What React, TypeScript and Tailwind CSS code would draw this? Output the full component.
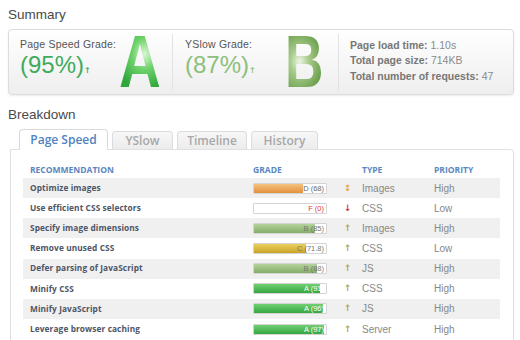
const rows = [
  { name: 'Optimize images', grade: 'D (68)', pct: 68, fill: 'bg-linear-to-b from-[#f4c27e] to-[#e2913a]', label: 'text-[#666]', arrow: '↕', arrowColor: 'text-[#eda548]', type: 'Images', priority: 'High' },
  { name: 'Use efficient CSS selectors', grade: 'F (0)', pct: 0, fill: 'bg-white', label: 'text-[#e0393e]', arrow: '↓', arrowColor: 'text-[#d8343a]', type: 'CSS', priority: 'Low' },
  { name: 'Specify image dimensions', grade: 'B (85)', pct: 85, fill: 'bg-linear-to-b from-[#b4d29c] to-[#86ad68]', label: 'text-[#777]', arrow: '↑', arrowColor: 'text-[#b0a55a]', type: 'Images', priority: 'High' },
  { name: 'Remove unused CSS', grade: 'C (71.8)', pct: 71.8, fill: 'bg-linear-to-b from-[#ecd05c] to-[#c9a227]', label: 'text-[#777]', arrow: '↑', arrowColor: 'text-[#b0a55a]', type: 'CSS', priority: 'Low' },
  { name: 'Defer parsing of JavaScript', grade: 'B (88)', pct: 88, fill: 'bg-linear-to-b from-[#b4d29c] to-[#86ad68]', label: 'text-[#777]', arrow: '↑', arrowColor: 'text-[#b0a55a]', type: 'JS', priority: 'High' },
  { name: 'Minify CSS', grade: 'A (91)', pct: 91, fill: 'bg-linear-to-b from-[#6fd072] to-[#35a642]', label: 'text-white', arrow: '↑', arrowColor: 'text-[#b0a55a]', type: 'CSS', priority: 'High' },
  { name: 'Minify JavaScript', grade: 'A (96)', pct: 96, fill: 'bg-linear-to-b from-[#6fd072] to-[#35a642]', label: 'text-white', arrow: '↑', arrowColor: 'text-[#b0a55a]', type: 'JS', priority: 'High' },
  { name: 'Leverage browser caching', grade: 'A (97)', pct: 97, fill: 'bg-linear-to-b from-[#6fd072] to-[#35a642]', label: 'text-white', arrow: '↑', arrowColor: 'text-[#b0a55a]', type: 'Server', priority: 'High' },
];

const tabs = [
  { name: 'YSlow', w: 'w-[61px]' },
  { name: 'Timeline', w: 'w-[70px]' },
  { name: 'History', w: 'w-[67px]' },
];

function GradeBar({ row }: { row: (typeof rows)[number] }) {
  return (
    <div className="relative h-[11px] w-[74px] overflow-hidden rounded-[1px] border border-[#d4d4d4] bg-white">
      <div className={`h-full ${row.fill}`} style={{ width: row.pct + '%' }} />
      <span className={`absolute right-[2px] top-0 text-[7.5px] leading-[10px] ${row.label}`}>{row.grade}</span>
    </div>
  );
}

export default function App() {
  return (
    <div className="h-[340px] w-[520px] overflow-hidden bg-white px-2 pt-[5.5px] font-['Liberation_Sans',Arial,sans-serif]">
      <h2 className="text-[13.5px] leading-[18px] text-[#4a4a4a]">Summary</h2>

      <div className="mt-[5.5px] flex h-[66px] w-[506px] rounded-[4px] border border-[#dcdcdc] bg-linear-to-b from-white to-[#eeeeee] shadow-[0_1px_2px_rgba(0,0,0,0.08)]">
        <div className="flex w-[163px] pl-[11px]">
          <div className="w-[102px] pt-[8px]">
            <p className="text-[10.5px] leading-[13px] tracking-[0.2px] text-[#555]">Page Speed Grade:</p>
            <p className="text-[24px] leading-[28px] text-[#3fab5c]">
              (95%)<span className="font-['DejaVu_Sans',sans-serif] text-[8px] font-bold">↑</span>
            </p>
          </div>
          <span className="mt-[5px] inline-block origin-left scale-x-[0.78] bg-[radial-gradient(circle_at_62%_32%,#d9f6d2_0%,#6fd26b_30%,#2ea63a_70%)] bg-clip-text text-[74px] font-bold leading-[54px] text-transparent">
            A
          </span>
        </div>
        <div className="my-[4px] w-px bg-[#e2e2e2]" />
        <div className="flex w-[165px] pl-[12px]">
          <div className="w-[102px] pt-[8px]">
            <p className="text-[10.5px] leading-[13px] tracking-[0.2px] text-[#555]">YSlow Grade:</p>
            <p className="text-[24px] leading-[28px] text-[#8cc07b]">
              (87%)<span className="font-['DejaVu_Sans',sans-serif] text-[8px] font-bold">↑</span>
            </p>
          </div>
          <span className="mt-[5px] inline-block origin-left scale-x-[0.72] bg-[radial-gradient(circle_at_38%_45%,#eef5e6_0%,#a7cb8b_28%,#6c9f4c_70%)] bg-clip-text text-[74px] font-bold leading-[54px] text-transparent">
            B
          </span>
        </div>
        <div className="my-[4px] w-px bg-[#e2e2e2]" />
        <div className="pl-[11px] pt-[7.5px] text-[10.5px] leading-[15.5px] text-[#8a8a8a]">
          <p><span className="font-bold text-[#777]">Page load time:</span> 1.10s</p>
          <p><span className="font-bold text-[#777]">Total page size:</span> 714KB</p>
          <p><span className="font-bold text-[#777]">Total number of requests:</span> 47</p>
        </div>
      </div>

      <h2 className="mt-[11px] text-[13.5px] leading-[18px] text-[#4a4a4a]">Breakdown</h2>

      <div className="mt-[5px] flex items-end gap-[4px] pl-[11px] font-['Open_Sans',sans-serif]">
        <div className="relative z-10 -mb-px flex h-[21px] w-[89px] items-center justify-center rounded-t-[4px] border border-b-0 border-[#dadada] bg-white text-[12px] font-semibold text-[#4f82c0]">
          Page Speed
        </div>
        {tabs.map((t) => (
          <div
            key={t.name}
            className={`flex h-[18px] ${t.w} items-center justify-center rounded-t-[4px] border border-b-0 border-[#dcdcdc] bg-linear-to-b from-[#f7f7f7] to-[#ececec] text-[12px] font-semibold text-[#a8a8a8]`}
          >
            {t.name}
          </div>
        ))}
      </div>

      <div className="ml-[2px] h-[200px] w-[504px] rounded-tr-[4px] border border-[#e0e0e0] pl-[12px] pt-[12px]">
        <div className="grid h-[16px] grid-cols-[223px_109px_72px_1fr] items-center pl-[7px] font-['Open_Sans',sans-serif] text-[8.5px] font-bold text-[#5a86c2]">
          <span>RECOMMENDATION</span>
          <span>GRADE</span>
          <span>TYPE</span>
          <span>PRIORITY</span>
        </div>
        <div className="w-[477px]">
          {rows.map((r, i) => (
            <div
              key={r.name}
              className={`grid h-[20.15px] grid-cols-[223px_91px_18px_72px_1fr] items-center pl-[7px] ${i % 2 === 0 ? 'bg-[#f0f0f0]' : 'bg-white'}`}
            >
              <span className="font-['Open_Sans',sans-serif] text-[8.3px] font-bold tracking-[0.1px] text-[#4e5566]">{r.name}</span>
              <GradeBar row={r} />
              <span className={`font-['DejaVu_Sans',sans-serif] text-[9px] font-bold leading-none ${r.arrowColor}`}>{r.arrow}</span>
              <span className="text-[10px] text-[#888]">{r.type}</span>
              <span className="text-[10px] text-[#888]">{r.priority}</span>
            </div>
          ))}
        </div>
      </div>
    </div>
  );
}
